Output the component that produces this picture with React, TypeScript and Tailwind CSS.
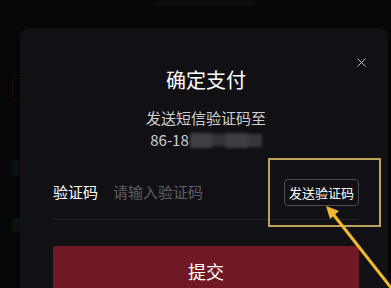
import { X } from 'lucide-react';

const cjk = { fontFamily: '"Noto Sans CJK SC", "Noto Sans", sans-serif' };

export default function App() {
  return (
    <div className="relative w-[391px] h-[288px] overflow-hidden bg-[#060608] pt-[28px] pl-[20px] pr-[3px]" style={cjk}>
      {/* faint page content behind the sheet */}
      <div className="absolute left-[155px] top-0 w-[100px] h-[6px] bg-[#111113] blur-[2px]" />
      <div className="absolute left-[12px] top-[78px] w-[10px] h-[22px] rounded-[3px] border border-[#1f0c0e]" />
      <div className="absolute left-[11px] top-[160px] w-[8px] h-[16px] rounded-[3px] bg-[#0a1417] blur-[1px]" />
      <div className="absolute left-[12px] top-[218px] w-[8px] h-[14px] rounded-[3px] bg-[#0b140d] blur-[1px]" />

      {/* sheet */}
      <div className="relative h-full rounded-t-[9px] bg-[#111115] pt-[40px] pl-[33px] pr-[29px]">
        <button className="absolute right-[19px] top-[27px] text-[#c4c4c8]">
          <X size={15} strokeWidth={1.6} />
        </button>

        <h1 className="text-center text-[20px] leading-[24px] text-white">确定支付</h1>

        <div className="mt-[15px] text-center text-[15px] leading-[22px] text-[#cfcfd3]">
          <div>发送短信验证码至</div>
          <div className="flex items-center justify-center">
            <span>86-18</span>
            <span className="ml-[1px] flex h-[15px] w-[72px] items-center blur-[1.5px]">
              <span className="h-full w-[22px] bg-[#404044]" />
              <span className="h-[12px] w-[14px] bg-[#353539]" />
              <span className="h-full w-[22px] bg-[#3e3e42]" />
              <span className="h-[13px] w-[14px] bg-[#38383c]" />
            </span>
          </div>
        </div>

        <div className="mt-[15px] flex h-[54px] items-center border-b border-[#232327]">
          <span className="text-[15px] text-white">验证码</span>
          <span className="ml-[15px] text-[15px] text-[#5e5e63]">请输入验证码</span>
          <button className="ml-auto h-[27px] rounded-[4px] border border-[#4d4d52] px-[4px] text-[13px] leading-[25px] text-white">
            发送验证码
          </button>
        </div>

        <button className="mt-[26px] h-[50px] w-full rounded-t-[3px] bg-[#6f1924] text-[18px] text-white">
          提交
        </button>
      </div>

      {/* annotation */}
      <div className="absolute left-[268px] top-[158px] h-[69px] w-[113px] border-2 border-[#bfa257]" />
      <svg className="absolute left-0 top-0" width="391" height="288" viewBox="0 0 391 288">
        <line x1="392" y1="289" x2="333" y2="214" stroke="#f0b92e" strokeWidth="3" />
        <polygon points="326,206 339,211 330,219" fill="#f0b92e" />
      </svg>
    </div>
  );
}
